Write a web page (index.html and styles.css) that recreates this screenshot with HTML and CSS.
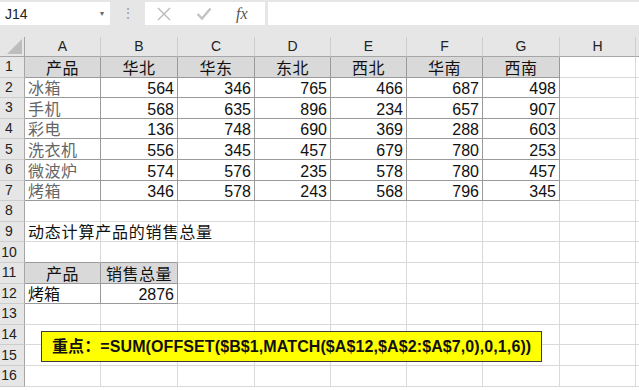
FILE: index.html
```html
<!DOCTYPE html>
<html lang="zh">
<head>
    <meta charset="UTF-8">
    <meta name="viewport" content="width=device-width, initial-scale=1.0">
    <title>动态计算产品的销售总量</title>
    <link rel="stylesheet" href="styles.css">
</head>
<body>
    <div class="fbar">
        <div class="namebox">
            <span>J14</span>
            <span class="drop">&#9662;</span>
        </div>
        <div class="grip">&#8942;</div>
        <div class="btns">
            <svg class="btn-x" width="14" height="14" viewBox="0 0 14 14">
                <path d="M1 1 L13 13 M13 1 L1 13" stroke="#b8b8b8" stroke-width="1.3" fill="none"/>
            </svg>
            <svg class="btn-ok" width="16" height="13" viewBox="0 0 16 13">
                <path d="M1.5 7 L6 11.5 L14.5 1.5" stroke="#c2c2c2" stroke-width="2.4" fill="none"/>
            </svg>
            <span class="btn-fx">fx</span>
        </div>
        <div class="finput"></div>
    </div>

    <div class="sheet">
        <table id="grid">
            <colgroup>
                <col class="c-rh">
                <col class="c76"><col class="c77"><col class="c77"><col class="c76">
                <col class="c76"><col class="c76"><col class="c77"><col class="c76">
                <col>
            </colgroup>
            <thead>
                <tr class="colhead">
                    <th class="corner"><span class="tri"></span></th>
                    <th>A</th><th>B</th><th>C</th><th>D</th><th>E</th><th>F</th><th>G</th><th>H</th><th class="last"></th>
                </tr>
            </thead>
            <tbody>
                <!-- righe generate dallo script -->
            </tbody>
        </table>

        <div class="note">重点：=SUM(OFFSET($B$1,MATCH($A$12,$A$2:$A$7,0),0,1,6))</div>
    </div>

    <script>
        const body = document.getElementById('grid').querySelector('tbody');

        // contenuto delle celle: [riga][colonna A..H]
        const cells = {
            1: ['产品', '华北', '华东', '东北', '西北', '华南', '西南'],
            2: ['冰箱', 564, 346, 765, 466, 687, 498],
            3: ['手机', 568, 635, 896, 234, 657, 907],
            4: ['彩电', 136, 748, 690, 369, 288, 603],
            5: ['洗衣机', 556, 345, 457, 679, 780, 253],
            6: ['微波炉', 574, 576, 235, 578, 780, 457],
            7: ['烤箱', 346, 578, 243, 568, 796, 345],
            9: ['动态计算产品的销售总量'],
            11: ['产品', '销售总量'],
            12: ['烤箱', 2876]
        };

        for (let r = 1; r <= 16; r++) {
            const row = document.createElement('tr');
            const data = cells[r] || [];
            let html = `<th class="rh">${r}</th>`;

            for (let c = 0; c < 8; c++) {
                const v = data[c];
                const cls = [];

                if (v !== undefined) cls.push(typeof v === 'number' ? 'num' : 'txt');
                if (r <= 7 && c < 7) cls.push('tb');
                if ((r === 11 || r === 12) && c < 2) cls.push('tb');
                if ((r === 1 || r === 11) && c < 7 && v !== undefined) cls.push('hd');
                if (r >= 2 && r <= 7 && c === 0) cls.push('prod');
                if (r === 9 && c === 0) cls.push('title');
                if (r === 10 && c < 2) cls.push('tb-top');

                html += `<td class="${cls.join(' ')}">${v === undefined ? '' : v}</td>`;
            }

            html += '<td class="last"></td>';
            row.innerHTML = html;
            body.appendChild(row);
        }
    </script>
</body>
</html>
```

FILE: styles.css
```css
html, body {
    margin: 0;
    padding: 0;
}
body {
    width: 639px;
    height: 390px;
    overflow: hidden;
    background-color: #fff;
    font-family: "Liberation Sans", "Noto Sans CJK SC", sans-serif;
}

/* barra della formula */
.fbar {
    display: flex;
    height: 23px;
    padding: 2px 0 12px;
    background-color: #e6e6e6;
}
.namebox {
    width: 110px;
    background-color: #fff;
    display: flex;
    align-items: center;
    justify-content: space-between;
    padding: 0 6px 0 5px;
    box-sizing: border-box;
    font-size: 14px;
    color: #222;
}
.drop {
    font-size: 8px;
    color: #666;
}
.grip {
    width: 35px;
    text-align: center;
    color: #a0a0a0;
    font-size: 14px;
    line-height: 23px;
}
.btns {
    width: 120px;
    background-color: #fff;
    display: flex;
    align-items: center;
}
.btn-x {
    margin-left: 12px;
}
.btn-ok {
    margin-left: 25px;
}
.btn-fx {
    margin-left: 24px;
    font-family: "Liberation Serif", serif;
    font-style: italic;
    font-size: 16px;
    color: #555;
}
.finput {
    flex: 1;
    margin-left: 3px;
    background-color: #fff;
}

/* foglio */
.sheet {
    position: relative;
}
table {
    border-collapse: separate;
    border-spacing: 0;
    table-layout: fixed;
    width: 639px;
    font-size: 16px;
}
.c-rh { width: 25px; }
.c76 { width: 76px; }
.c77 { width: 77px; }

.colhead th {
    height: 20px;
    padding: 0;
    box-sizing: border-box;
    background-color: #e6e6e6;
    border-right: 1px solid #cdcdcd;
    border-bottom: 1px solid #a6a6a6;
    font-weight: normal;
    font-size: 14px;
    color: #222;
    line-height: 19px;
}
.colhead th.last {
    border-right: none;
}
.corner {
    position: relative;
}
.corner.corner {
    border-right: 1px solid #a6a6a6;
}
.tri {
    position: absolute;
    right: 2px;
    bottom: 2px;
    width: 0;
    height: 0;
    border-left: 15px solid transparent;
    border-bottom: 15px solid #bdbdbd;
}

tbody tr {
    height: 20.6px;
}
td, .rh {
    padding: 0 3px;
    box-sizing: border-box;
    border-right: 1px solid #d9d9d9;
    border-bottom: 1px solid #d9d9d9;
    vertical-align: bottom;
    line-height: 17px;
    white-space: nowrap;
    overflow: visible;
}
.rh {
    background-color: #e6e6e6;
    border-right: 1px solid #a6a6a6;
    border-bottom: 1px solid #cdcdcd;
    font-weight: normal;
    font-size: 14px;
    color: #222;
    text-align: center;
    padding: 0 6px 0 0;
    vertical-align: middle;
}
td.last {
    border-right: none;
}

td.tb {
    border-right-color: #9a9a9a;
    border-bottom-color: #9a9a9a;
}
td.tb-top {
    border-bottom-color: #9a9a9a;
}
td.num {
    text-align: right;
    color: #111;
}
td.txt {
    text-align: left;
    color: #111;
}
td.hd {
    background-color: #d9d9d9;
    text-align: center;
    letter-spacing: 0.5px;
}
td.prod {
    color: #666;
    letter-spacing: 0.5px;
}
td.title {
    letter-spacing: 0.8px;
}

/* nota gialla sopra le celle */
.note {
    position: absolute;
    left: 41px;
    top: 294px;
    width: 501px;
    height: 31px;
    box-sizing: border-box;
    border: 1px solid #3c3c3c;
    background-color: #ffff00;
    padding-left: 10px;
    font-size: 16px;
    font-weight: bold;
    letter-spacing: 0.1px;
    color: #111;
    line-height: 29px;
    white-space: nowrap;
}
```
